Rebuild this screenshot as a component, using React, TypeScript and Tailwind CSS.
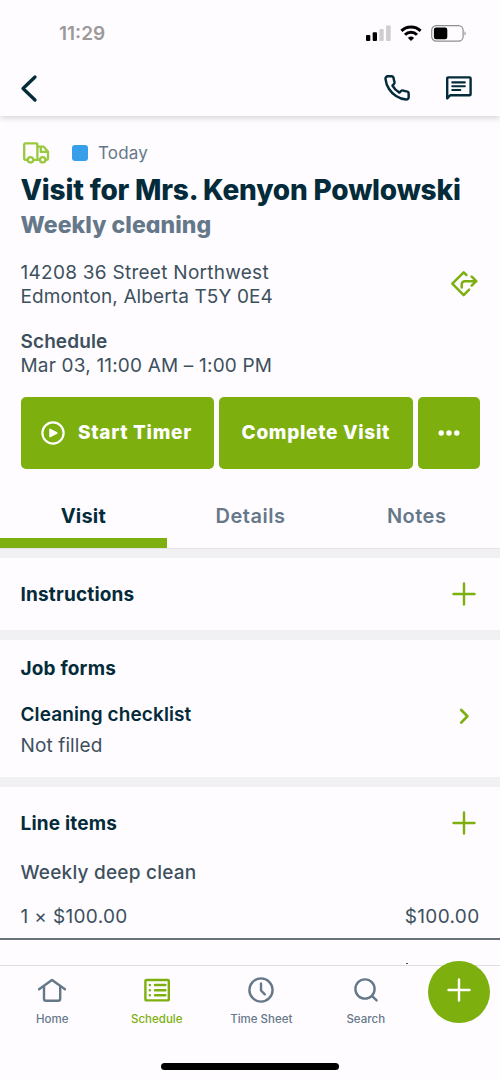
import type { ReactNode } from 'react';

function StatusBar() {
  return (
    <div className="flex h-[58px] items-start justify-between pl-[59px] pr-[33px]">
      <span className="mt-[22px] text-[19px] leading-6 font-semibold text-[#9d9999]">11:29</span>
      <div className="mt-[25px] flex items-start">
        <svg width="26" height="17" viewBox="0 0 26 17" className="mr-2">
          <rect x="0" y="10" width="4.3" height="6" rx="1" fill="#000" />
          <rect x="6.7" y="7.3" width="4.3" height="8.7" rx="1" fill="#000" />
          <rect x="13.4" y="4" width="4.3" height="12" rx="1" fill="#cfcdd0" />
          <rect x="20.1" y="0.5" width="4.6" height="15.5" rx="1" fill="#cfcdd0" />
        </svg>
        <svg width="22" height="17" viewBox="0 0 22 17" fill="none" stroke="#000" strokeWidth="3" className="mr-[9px]">
          <path d="M1.4 5.9a13.8 13.8 0 0 1 19.2 0" />
          <path d="M5 9.8a8.6 8.6 0 0 1 12 0" />
          <path d="M7.9 12.9a4.6 4.6 0 0 1 6.2 0L11 16z" fill="#000" stroke="none" />
        </svg>
        <svg width="36" height="17" viewBox="0 0 36 17">
          <rect x="0.7" y="0.7" width="31.4" height="15.4" rx="4.6" fill="none" stroke="#8f8d90" strokeWidth="1.2" />
          <rect x="2.9" y="2.6" width="13.4" height="11.6" rx="2.2" fill="#000" />
          <path d="M33.5 6.2c1.6.7 1.6 3.7 0 4.4z" fill="#8f8d90" />
        </svg>
      </div>
    </div>
  );
}

function Header() {
  return (
    <header className="relative z-10 h-[116px] shrink-0 bg-[#fefcff] shadow-[0_2px_6px_rgba(0,0,0,0.16)]">
      <StatusBar />
      <div className="flex h-[58px] items-center justify-between pr-7 pl-5 text-[#032b3a]">
        <svg width="20" height="30" viewBox="0 0 20 30" fill="none" stroke="currentColor" strokeWidth="3.3" strokeLinecap="round" strokeLinejoin="round" className="mt-px">
          <path d="M15 4 3 15.5 15 27" />
        </svg>
        <div className="flex items-center gap-[34px]">
          <svg width="28" height="28" viewBox="0 0 24 24" fill="none" stroke="currentColor" strokeWidth="2.1" strokeLinecap="round" strokeLinejoin="round" className="mt-0.5">
            <path d="M22 16.92v3a2 2 0 0 1-2.18 2 19.79 19.79 0 0 1-8.63-3.07 19.5 19.5 0 0 1-6-6 19.79 19.79 0 0 1-3.07-8.67A2 2 0 0 1 4.11 2h3a2 2 0 0 1 2 1.72c.127.96.361 1.903.7 2.81a2 2 0 0 1-.45 2.11L8.09 9.91a16 16 0 0 0 6 6l1.27-1.27a2 2 0 0 1 2.11-.45c.907.339 1.85.573 2.81.7A2 2 0 0 1 22 16.92z" />
          </svg>
          <svg width="27" height="26" viewBox="0 0 27 26" fill="none" stroke="currentColor" strokeWidth="2.4" strokeLinejoin="round" strokeLinecap="round" className="mt-0.5">
            <path d="M2.2 23.4V3.4a1 1 0 0 1 1-1h21.4a1 1 0 0 1 1 1v15.8a1 1 0 0 1-1 1H5.2z" />
            <path d="M7.3 7.4h12.5M7.3 11.3h12.5M7.3 15h8" strokeWidth="2.1" />
          </svg>
        </div>
      </div>
    </header>
  );
}

function TruckIcon() {
  return (
    <svg width="28" height="22" viewBox="0 0 28 22" fill="none" stroke="#98c93f" strokeWidth="2.3" strokeLinejoin="round" strokeLinecap="round">
      <path d="M5.2 17.8H3.2a1 1 0 0 1-1-1V2.4a1 1 0 0 1 1-1h11.2a1 1 0 0 1 1 1v15.4h-3.9" />
      <path d="M15.4 4.7h5.8a1 1 0 0 1 .8.4l4 4.7v7a1 1 0 0 1-1 1h-.8M15.4 17.8h2.4M18.8 5v4.9h7" />
      <circle cx="8.5" cy="17.8" r="2.7" />
      <circle cx="20.7" cy="17.8" r="2.7" />
    </svg>
  );
}

function DirectionsIcon() {
  return (
    <svg width="28" height="28" viewBox="0 0 28 28" fill="none" stroke="#7db00e" strokeWidth="2.5" strokeLinejoin="round" strokeLinecap="round" className="mb-0.5">
      <path d="M16.4 5 13.7 2.3 2.3 13.7l11.4 11.4 5.4-5.4" />
      <path d="M11.7 17.4v-3.2a3 3 0 0 1 3-3h11.5M21.7 6.7l4.6 4.5-4.6 4.5" />
    </svg>
  );
}

function PlusIcon() {
  return (
    <svg width="26" height="26" viewBox="0 0 26 26" fill="none" stroke="currentColor" strokeWidth="2.4" strokeLinecap="round">
      <path d="M13 2.5v21M2.5 13h21" />
    </svg>
  );
}

function Divider() {
  return <div className="h-2.5 bg-[#f1f0f3]" />;
}

function SectionTitle({ children }: { children: ReactNode }) {
  return <h2 className="text-[19px] leading-6 font-bold tracking-[0.18px] text-[#032b3a]">{children}</h2>;
}

function AddSection({ title }: { title: string }) {
  return (
    <div className="flex h-[72px] items-start justify-between pt-[23px] pr-[23px] pl-[20.5px]">
      <div className="pt-0.5"><SectionTitle>{title}</SectionTitle></div>
      <button className="text-[#7db00e]" aria-label="Add"><PlusIcon /></button>
    </div>
  );
}

function Actions() {
  return (
    <div className="mt-[19px] flex h-[72px] gap-[5px] px-[20.5px] text-[19px] font-extrabold tracking-[0.7px] text-white">
      <button className="flex w-[193.5px] items-center rounded-[5px] bg-[#7db00e] pl-5">
        <svg width="24" height="24" viewBox="0 0 24 24" fill="none" className="mr-[13.5px]">
          <circle cx="12" cy="12" r="10.6" stroke="#fff" strokeWidth="2.2" />
          <path d="M9 8.3v7.4L15.8 12z" fill="#fff" stroke="#fff" strokeWidth="1.5" strokeLinejoin="round" />
        </svg>
        <span className="whitespace-nowrap">Start Timer</span>
      </button>
      <button className="flex w-[193.5px] items-center justify-center rounded-[5px] bg-[#7db00e] whitespace-nowrap">Complete Visit</button>
      <button className="flex flex-1 items-center justify-center rounded-[5px] bg-[#7db00e]" aria-label="More">
        <svg width="24" height="8" viewBox="0 0 24 8" fill="#fff">
          <circle cx="4.2" cy="4" r="2.7" /><circle cx="12" cy="4" r="2.7" /><circle cx="19.8" cy="4" r="2.7" />
        </svg>
      </button>
    </div>
  );
}

function Tabs() {
  return (
    <div className="grid h-[79px] grid-cols-3 text-center text-xl leading-[25px]">
      <div className="border-b-10 border-[#7db00e] pt-[35px] font-bold tracking-[0.2px] text-[#032b3a]">Visit</div>
      <div className="pt-[35px] pl-px font-semibold tracking-[0.5px] text-[#65788a]">Details</div>
      <div className="pt-[35px] font-semibold tracking-[0.5px] text-[#65788a]">Notes</div>
    </div>
  );
}

function NavItem({ label, active, children }: { label: string; active?: boolean; children: ReactNode }) {
  return (
    <div className={active ? 'flex w-[104.5px] flex-col items-center text-[#7db00e]' : 'flex w-[104.5px] flex-col items-center text-[#65788a]'}>
      <svg width="30" height="28" viewBox="0 0 30 28" fill="none" stroke="currentColor" strokeWidth="2.4" strokeLinecap="round" strokeLinejoin="round">
        {children}
      </svg>
      <span className="mt-[7px] text-[11.5px] leading-4 font-medium whitespace-nowrap">{label}</span>
    </div>
  );
}

function BottomNav() {
  return (
    <nav className="relative flex h-[115px] shrink-0 flex-col justify-between border-t border-[#dedde1] bg-[#fefcff]">
      <div className="flex pt-2.5">
        <NavItem label="Home">
          <path d="M2 13.2 15 4l13 9.2" />
          <path d="M7 10.5v12.3a2 2 0 0 0 2 2h12.2a2 2 0 0 0 2-2V10.5" />
        </NavItem>
        <NavItem label="Schedule" active>
          <rect x="3.4" y="4" width="23.4" height="20.4" rx="1" />
          <path d="M7.8 9h.1M7.8 14.2h.1M7.8 19.3h.1M13 9h10.4M13 14.2h10.4M13 19.3h10.4" />
        </NavItem>
        <NavItem label="Time Sheet">
          <circle cx="15" cy="14" r="11.6" />
          <path d="M15 7.5v7l3.8 3.8" />
        </NavItem>
        <NavItem label="Search">
          <circle cx="14" cy="13" r="9.6" />
          <path d="m21.2 20.2 4.4 4.2" />
        </NavItem>
      </div>
      <div className="mb-2.5 h-[7px] w-[178px] self-center rounded-full bg-black" />
      <button className="absolute -top-[5.5px] left-[428px] flex size-[62px] items-center justify-center rounded-full bg-[#7db00e] pb-[3px] text-white" aria-label="Create">
        <PlusIcon />
      </button>
    </nav>
  );
}

export default function App() {
  return (
    <div className="flex h-[1080px] w-[500px] flex-col overflow-hidden bg-[#fefcff] font-[Inter,sans-serif] text-[#3d505d]">
      <Header />
      <main className="min-h-0 flex-1 overflow-hidden pt-[27px]">
        <div className="flex h-5 items-center pl-[22px]">
          <TruckIcon />
          <span className="ml-[22px] size-4 rounded-[3px] bg-[#379fe9]" />
          <span className="ml-2.5 text-[17px] leading-5 tracking-[0.15px] text-[#65788a]">Today</span>
        </div>
        <h1 className="mt-[11px] pl-[20.5px] text-[28px] leading-[33px] font-extrabold tracking-[-0.19px] whitespace-nowrap text-[#032b3a] [font-feature-settings:'cv11']">Visit for Mrs. Kenyon Powlowski</h1>
        <p className="mt-[5px] pl-[20.5px] text-[23px] leading-[26px] font-extrabold tracking-[0.08px] text-[#65788a] [font-feature-settings:'cv11']">Weekly cleaning</p>
        <div className="mt-[23px] flex items-center justify-between pr-[22px] pl-[20.5px] text-[19px] leading-6">
          <div>
            <p className="tracking-[0.27px]">14208 36 Street Northwest</p>
            <p className="tracking-[0.11px]">Edmonton, Alberta T5Y 0E4</p>
          </div>
          <DirectionsIcon />
        </div>
        <div className="mt-5 pl-[20.5px] text-[19px] leading-6">
          <p className="leading-[25px] font-semibold tracking-[0.1px]">Schedule</p>
          <p className="tracking-[0.18px]">Mar 03, 11:00 AM – 1:00 PM</p>
        </div>
        <Actions />
        <Tabs />
        <div className="h-2.5 border-t border-[#e4e3e7] bg-[#f1f0f3]" />
        <AddSection title="Instructions" />
        <Divider />
        <section className="pt-[17px] pb-[19px] pl-[20.5px]">
          <SectionTitle>Job forms</SectionTitle>
          <div className="mt-[22px] flex items-start justify-between pr-[30px] text-[19px] leading-6">
            <div>
              <p className="font-semibold tracking-[0.1px] text-[#032b3a]">Cleaning checklist</p>
              <p className="mt-[7px] tracking-[0.12px]">Not filled</p>
            </div>
            <svg width="12" height="20" viewBox="0 0 12 20" fill="none" stroke="#7db00e" strokeWidth="2.7" strokeLinecap="round" strokeLinejoin="round" className="mt-[3px]">
              <path d="m3.2 4 6.2 6.3-6.2 6.3" />
            </svg>
          </div>
        </section>
        <Divider />
        <AddSection title="Line items" />
        <div className="mt-0.5 border-b-2 border-[#67727a] px-[20.5px] pb-[9px] text-[19px] leading-6">
          <p className="font-medium tracking-[0.22px]">Weekly deep clean</p>
          <div className="mt-5 flex justify-between">
            <span className="tracking-[0.35px]">1 × $100.00</span>
            <span className="tracking-[0.35px]">$100.00</span>
          </div>
        </div>
        <div className="mt-[23px] ml-[406px] h-px w-0.5 bg-[#3d505d]" />
      </main>
      <BottomNav />
    </div>
  );
}
